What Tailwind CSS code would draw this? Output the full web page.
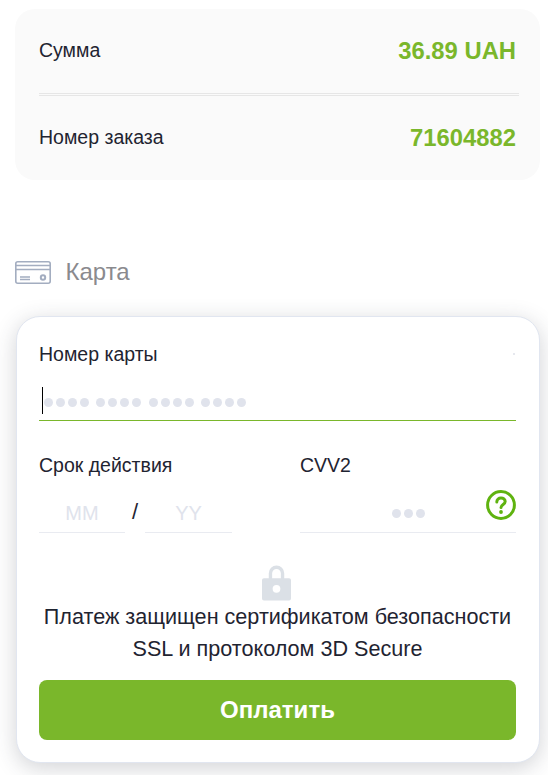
<!DOCTYPE html>
<html lang="ru">
<head>
    <meta charset="UTF-8">
    <meta name="viewport" content="width=device-width, initial-scale=1.0">
    <title>Оплата</title>
    <script src="https://cdn.jsdelivr.net/npm/@tailwindcss/browser@4"></script>
</head>
<body class="bg-white font-['Liberation_Sans',Arial,sans-serif] text-[#1f2431] overflow-hidden">
    <main class="w-[548px] h-[775px] pt-[9px] pl-[15px] pr-[8px] overflow-hidden">
        <!-- Сумма / заказ -->
        <section class="h-[171px] bg-[#fafafa] rounded-[20px] pl-[24px] pr-[21px]">
            <div class="h-[87px] pr-[3px] flex items-center justify-between border-b-[3px] border-double border-[#e6e6e6]">
                <span class="text-[19.5px]">Сумма</span>
                <span class="text-[23.8px] font-bold text-[#7ab72b]">36.89 UAH</span>
            </div>
            <div class="h-[84px] pr-[3px] flex items-center justify-between">
                <span class="text-[19.5px]">Номер заказа</span>
                <span class="text-[23.8px] font-bold text-[#7ab72b]">71604882</span>
            </div>
        </section>

        <!-- Заголовок -->
        <div class="mt-[77px] flex items-center gap-[14.500px] h-[30px]">
            <svg class="w-[36px] h-[23px]" viewBox="0 0 36 23" fill="none" stroke="#a3adc0" stroke-width="1.6">
                <rect x="0.8" y="0.8" width="34.400" height="21.400" rx="2"/>
                <path d="M1 4.500h34M1 8.500h34M5 16h10M5 18.500h10"/>
                <circle cx="28" cy="16.500" r="2.200" stroke-width="2"/>
            </svg>
            <span class="text-[24px] text-[#8a8a8e]">Карта</span>
        </div>

        <!-- Форма -->
        <section class="mt-[29px] ml-[0.5px] h-[447px] bg-white border border-[#e1e6f0] rounded-[24px] shadow-[0_5px_22px_rgba(50,55,70,0.22)] pl-[22.500px] pr-[23px] relative">
            <span class="absolute right-[24px] top-[36px] w-[2px] h-[2px] bg-[#e6e8ee]"></span>
            <div class="pt-[25px] text-[19.5px] leading-[24px]">Номер карты</div>
            <div class="relative mt-[9px] h-[46px] border-b border-b-[#7ab72b] flex items-center pl-[3px]">
                <span class="absolute left-[3px] top-[12px] w-px h-[27px] bg-black"></span>
                <div class="flex gap-[7.300px] ml-[2px] mt-[9px]">
                    <div class="flex gap-[3px]"><i class="w-[9px] h-[9px] rounded-full bg-[#e0e3ec]"></i><i class="w-[9px] h-[9px] rounded-full bg-[#e0e3ec]"></i><i class="w-[9px] h-[9px] rounded-full bg-[#e0e3ec]"></i><i class="w-[9px] h-[9px] rounded-full bg-[#e0e3ec]"></i></div>
                    <div class="flex gap-[3px]"><i class="w-[9px] h-[9px] rounded-full bg-[#e0e3ec]"></i><i class="w-[9px] h-[9px] rounded-full bg-[#e0e3ec]"></i><i class="w-[9px] h-[9px] rounded-full bg-[#e0e3ec]"></i><i class="w-[9px] h-[9px] rounded-full bg-[#e0e3ec]"></i></div>
                    <div class="flex gap-[3px]"><i class="w-[9px] h-[9px] rounded-full bg-[#e0e3ec]"></i><i class="w-[9px] h-[9px] rounded-full bg-[#e0e3ec]"></i><i class="w-[9px] h-[9px] rounded-full bg-[#e0e3ec]"></i><i class="w-[9px] h-[9px] rounded-full bg-[#e0e3ec]"></i></div>
                    <div class="flex gap-[3px]"><i class="w-[9px] h-[9px] rounded-full bg-[#e0e3ec]"></i><i class="w-[9px] h-[9px] rounded-full bg-[#e0e3ec]"></i><i class="w-[9px] h-[9px] rounded-full bg-[#e0e3ec]"></i><i class="w-[9px] h-[9px] rounded-full bg-[#e0e3ec]"></i></div>
                </div>
            </div>

            <div class="flex mt-[32px]">
                <div class="w-[261px]">
                    <div class="text-[19.5px] leading-[24px]">Срок действия</div>
                    <div class="flex items-end mt-[9px] h-[47px]">
                        <div class="w-[86px] h-full pt-[15px] border-b border-[#e9ebf1] text-center text-[#e0e3ec] text-[20px] leading-[24px]">MM</div>
                        <div class="w-[20px] h-full pt-[14px] text-center text-[22px] leading-[24px]">/</div>
                        <div class="w-[87px] h-full pt-[15px] border-b border-[#e9ebf1] text-center text-[#e0e3ec] text-[20px] leading-[24px]">YY</div>
                    </div>
                </div>
                <div class="w-[216px]">
                    <div class="text-[19.5px] leading-[24px]">CVV2</div>
                    <div class="relative mt-[9px] h-[47px] border-b border-[#e9ebf1] flex items-center">
                        <div class="flex gap-[3px] ml-[92px] mt-[9px]"><i class="w-[9px] h-[9px] rounded-full bg-[#e0e3ec]"></i><i class="w-[9px] h-[9px] rounded-full bg-[#e0e3ec]"></i><i class="w-[9px] h-[9px] rounded-full bg-[#e0e3ec]"></i></div>
                        <svg class="absolute right-0 top-[4px] w-[30px] h-[30px]" viewBox="0 0 30 30" fill="none">
                            <circle cx="15" cy="15" r="13.400" stroke="#5fb30f" stroke-width="3"/>
                            <path d="M10.800 12c0-2.500 1.900-4 4.200-4s4.200 1.500 4.200 3.600c0 2.800-4.200 3-4.200 5.900" stroke="#5fb30f" stroke-width="3" stroke-linecap="round"/>
                            <circle cx="15" cy="22" r="1.900" fill="#5fb30f"/>
                        </svg>
                    </div>
                </div>
            </div>

            <svg class="block ml-[223px] mt-[31px] w-[29px] h-[37px]" viewBox="0 0 30 37" fill="#dbe0e6">
                <path d="M7 15V9a8 8 0 0 1 16 0v6h-3.500V9a4.500 4.500 0 0 0-9 0v6z"/>
                <path fill-rule="evenodd" d="M2 14h26a2 2 0 0 1 2 2v19a2 2 0 0 1-2 2H2a2 2 0 0 1-2-2V16a2 2 0 0 1 2-2zm13 7a4 4 0 1 0 0 8 4 4 0 0 0 0-8z"/>
            </svg>
            <p class="text-center text-[21.6px] leading-[32px] whitespace-nowrap">Платеж защищен сертификатом безопасности<br>SSL и протоколом 3D Secure</p>

            <button class="mt-[15px] w-full h-[60px] rounded-[8px] bg-[#7ab72b] text-white text-[24px] font-bold">Оплатить</button>
        </section>
    </main>
</body>
</html>
